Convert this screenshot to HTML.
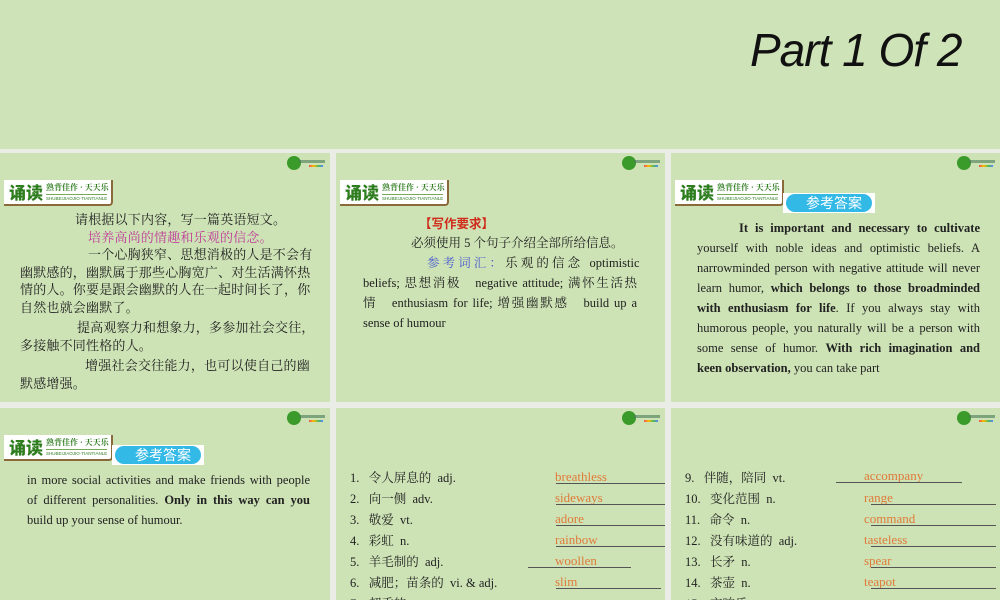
<!DOCTYPE html>
<html><head><meta charset="utf-8"><style>
*{margin:0;padding:0;box-sizing:border-box}
body{width:1000px;height:600px;overflow:hidden;background:#cee3b7;position:relative;font-family:"Liberation Serif","Noto Serif CJK SC",serif;color:#222}
.title{position:absolute;left:750px;top:23px;font-family:"Liberation Sans",sans-serif;font-style:italic;font-size:46px;color:#111;letter-spacing:-1px;white-space:nowrap}
.gapv,.gaph{position:absolute;background:#e9ede5}
.p{position:absolute;background:#cde3b5;overflow:hidden}
.logo{position:absolute;top:3px;right:3px;width:40px;height:14px}
.logo i{position:absolute;left:0;top:0;width:14px;height:14px;border-radius:50%;background:#3a9a2a}
.logo b{position:absolute;left:12px;top:4px;width:26px;height:3px;background:#4a7a5a;opacity:.6}
.logo u{position:absolute;left:22px;top:9px;width:14px;height:2px;background:linear-gradient(90deg,#e55,#fb0,#5b5,#58f)}
.badge{position:absolute;left:4px;top:27px;width:109px;height:26px;background:#fff;border-right:2px solid #8a6a3a;border-bottom:2px solid #8a6a3a;border-radius:0 0 4px 0;white-space:nowrap}
.badge .big{position:absolute;left:5px;top:1px;font-family:"Noto Sans CJK SC",sans-serif;font-weight:900;font-size:17px;color:#2e7d1e;line-height:22px}
.badge .sm{position:absolute;left:42px;top:2px;font-size:8px;color:#2e7d1e;font-family:"Noto Serif CJK SC",serif;font-weight:bold;line-height:11px}
.badge .en{position:absolute;left:42px;top:14px;font-size:4.5px;color:#2e7d1e;font-family:"Liberation Sans",sans-serif;border-top:1px solid #7a5;line-height:6px;padding-top:1px}
.ans{position:absolute;width:92px;height:20px;background:#fff}
.ans div{position:absolute;left:3px;top:1px;width:86px;height:18px;border-radius:10px;background:#33b9e6;color:#fff;font-family:"Noto Sans CJK SC",sans-serif;font-size:14px;line-height:18px;text-align:right;padding-right:10px}
.t{position:absolute;font-size:12.5px;line-height:20px}
.cn{font-size:13px;line-height:17.5px;letter-spacing:0.2px}
.j{text-align:justify}
.jl{text-align:justify;text-align-last:justify;white-space:nowrap}
.row{position:absolute;font-size:12.5px;white-space:nowrap;font-family:"Liberation Serif","Noto Serif CJK SC",serif}
.a{position:absolute;color:#e07a3a;font-size:13px;white-space:nowrap}
.ln{position:absolute;height:1px;background:#555}
</style></head><body>
<div class="title">Part 1 Of 2</div>
<div class="gaph" style="left:0;top:149px;width:1000px;height:4px"></div>
<div class="gaph" style="left:0;top:402px;width:1000px;height:6px"></div>
<div class="gapv" style="left:330px;top:149px;width:6px;height:451px"></div>
<div class="gapv" style="left:665px;top:149px;width:6px;height:451px"></div>

<!-- panel 1 -->
<div class="p" style="left:0;top:153px;width:330px;height:249px">
<div class="logo"><i></i><b></b><u></u></div>
<div class="badge"><span class="big">诵读</span><span class="sm">熟背佳作 · 天天乐</span><span class="en">SHUBEIJIAOJIO·TIANTIANLE</span></div>
<div class="t cn" style="left:20px;top:58px;width:290px">
<div style="padding-left:55px">请根据以下内容，写一篇英语短文。</div>
<div style="padding-left:68px;color:#c03a9a">培养高尚的情趣和乐观的信念。</div>
<div class="jl" style="padding-left:68px">一个心胸狭窄、思想消极的人是不会有</div>
<div class="jl">幽默感的，幽默属于那些心胸宽广、对生活满怀热</div>
<div class="jl">情的人。你要是跟会幽默的人在一起时间长了，你</div>
<div>自然也就会幽默了。</div>
<div class="jl" style="padding-left:57px;margin-top:3px">提高观察力和想象力，多参加社会交往，</div>
<div>多接触不同性格的人。</div>
<div class="jl" style="padding-left:65px;margin-top:3px">增强社会交往能力，也可以使自己的幽</div>
<div>默感增强。</div>
</div>
</div>

<!-- panel 2 -->
<div class="p" style="left:336px;top:153px;width:329px;height:249px">
<div class="logo"><i></i><b></b><u></u></div>
<div class="badge"><span class="big">诵读</span><span class="sm">熟背佳作 · 天天乐</span><span class="en">SHUBEIJIAOJIO·TIANTIANLE</span></div>
<div class="t" style="left:27px;top:60px;width:274px">
<div style="padding-left:56px;color:#d02a1a;font-weight:bold;font-family:'Noto Sans CJK SC',sans-serif;font-size:12.5px">【写作要求】</div>
<div style="padding-left:48px">必须使用 5 个句子介绍全部所给信息。</div>
<div class="jl" style="padding-left:64px"><span style="color:#4a5ad0">参 考 词 汇 ：</span> 乐 观 的 信 念 &nbsp; optimistic</div>
<div class="jl">beliefs; 思想消极 &nbsp; negative attitude; 满怀生活热</div>
<div class="jl">情 &nbsp; enthusiasm for life; 增强幽默感 &nbsp; build up a</div>
<div>sense of humour</div>
</div>
</div>

<!-- panel 3 -->
<div class="p" style="left:671px;top:153px;width:329px;height:249px">
<div class="logo"><i></i><b></b><u></u></div>
<div class="badge"><span class="big">诵读</span><span class="sm">熟背佳作 · 天天乐</span><span class="en">SHUBEIJIAOJIO·TIANTIANLE</span></div>
<div class="ans" style="left:112px;top:40px"><div>参考答案</div></div>
<div class="t" style="left:26px;top:65px;width:283px">
<div class="jl" style="padding-left:42px"><b>It is important and necessary to cultivate</b></div>
<div class="jl">yourself with noble ideas and optimistic beliefs. A</div>
<div class="jl">narrowminded person with negative attitude will never</div>
<div class="jl">learn humor, <b>which belongs to those broadminded</b></div>
<div class="jl"><b>with enthusiasm for life</b>. If you always stay with</div>
<div class="jl">humorous people, you naturally will be a person with</div>
<div class="jl">some sense of humor. <b>With rich imagination and</b></div>
<div><b>keen observation,</b> you can take part</div>
</div>
</div>

<!-- panel 4 -->
<div class="p" style="left:0;top:408px;width:330px;height:192px">
<div class="logo"><i></i><b></b><u></u></div>
<div class="badge"><span class="big">诵读</span><span class="sm">熟背佳作 · 天天乐</span><span class="en">SHUBEIJIAOJIO·TIANTIANLE</span></div>
<div class="ans" style="left:112px;top:37px"><div>参考答案</div></div>
<div class="t j" style="left:27px;top:62px;width:283px">in more social activities and make friends with people of different personalities. <b>Only in this way can you</b> build up your sense of humour.</div>
</div>

<!-- panel 5 -->
<div class="p" style="left:336px;top:408px;width:329px;height:192px">
<div class="logo"><i></i><b></b><u></u></div>
<div class="row" style="left:14px;top:60px">1.&nbsp;&nbsp; 令人屏息的 &nbsp;adj.</div><div class="a" style="left:219px;top:61px">breathless</div><div class="ln" style="left:220px;top:75px;width:109px"></div>
<div class="row" style="left:14px;top:81px">2.&nbsp;&nbsp; 向一侧 &nbsp;adv.</div><div class="a" style="left:219px;top:82px">sideways</div><div class="ln" style="left:220px;top:96px;width:109px"></div>
<div class="row" style="left:14px;top:102px">3.&nbsp;&nbsp; 敬爱 &nbsp;vt.</div><div class="a" style="left:219px;top:103px">adore</div><div class="ln" style="left:220px;top:117px;width:109px"></div>
<div class="row" style="left:14px;top:123px">4.&nbsp;&nbsp; 彩虹 &nbsp;n.</div><div class="a" style="left:219px;top:124px">rainbow</div><div class="ln" style="left:220px;top:138px;width:109px"></div>
<div class="row" style="left:14px;top:144px">5.&nbsp;&nbsp; 羊毛制的 &nbsp;adj.</div><div class="a" style="left:219px;top:145px">woollen</div><div class="ln" style="left:192px;top:159px;width:103px"></div>
<div class="row" style="left:14px;top:165px">6.&nbsp;&nbsp; 减肥；苗条的 &nbsp;vi. &amp; adj.</div><div class="a" style="left:219px;top:166px">slim</div><div class="ln" style="left:220px;top:180px;width:105px"></div>
<div class="row" style="left:14px;top:186px">7.&nbsp;&nbsp; 超重的</div>
</div>

<!-- panel 6 -->
<div class="p" style="left:671px;top:408px;width:329px;height:192px">
<div class="logo"><i></i><b></b><u></u></div>
<div class="row" style="left:14px;top:60px">9.&nbsp;&nbsp; 伴随，陪同 &nbsp;vt.</div><div class="a" style="left:193px;top:60px">accompany</div><div class="ln" style="left:165px;top:74px;width:126px"></div>
<div class="row" style="left:14px;top:81px">10.&nbsp;&nbsp; 变化范围 &nbsp;n.</div><div class="a" style="left:193px;top:82px">range</div><div class="ln" style="left:200px;top:96px;width:125px"></div>
<div class="row" style="left:14px;top:102px">11.&nbsp;&nbsp; 命令 &nbsp;n.</div><div class="a" style="left:193px;top:103px">command</div><div class="ln" style="left:200px;top:117px;width:125px"></div>
<div class="row" style="left:14px;top:123px">12.&nbsp;&nbsp; 没有味道的 &nbsp;adj.</div><div class="a" style="left:193px;top:124px">tasteless</div><div class="ln" style="left:200px;top:138px;width:125px"></div>
<div class="row" style="left:14px;top:144px">13.&nbsp;&nbsp; 长矛 &nbsp;n.</div><div class="a" style="left:193px;top:145px">spear</div><div class="ln" style="left:200px;top:159px;width:125px"></div>
<div class="row" style="left:14px;top:165px">14.&nbsp;&nbsp; 茶壶 &nbsp;n.</div><div class="a" style="left:193px;top:166px">teapot</div><div class="ln" style="left:200px;top:180px;width:125px"></div>
<div class="row" style="left:14px;top:186px">15.&nbsp;&nbsp; 交响乐</div>
</div>
</body></html>
